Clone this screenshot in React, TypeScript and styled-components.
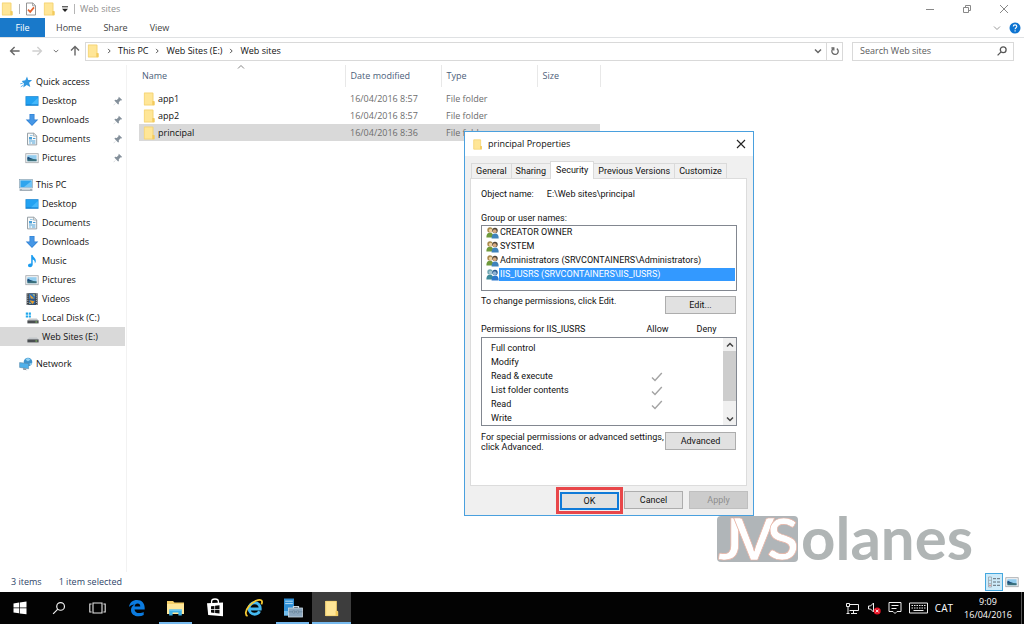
import React from "react";
import styled, { createGlobalStyle, css } from "styled-components";

const ui = `"Open Sans", "Noto Sans", sans-serif`;
const classic = `Roboto, "Liberation Sans", Arial, sans-serif`;

const Global = createGlobalStyle`
  * { box-sizing: border-box; }
  body { margin: 0; background: #fff; font-family: ${ui}; font-size: 9px; line-height: 14px; color: #111; }
  button, input { font: inherit; color: inherit; margin: 0; padding: 0; border: 0; background: none; border-radius: 0; }
  a { color: inherit; text-decoration: none; }
  ul { list-style: none; margin: 0; padding: 0; }
  svg { display: block; flex: none; }
`;

/* ---------- icons ---------- */
const Folder = ({ size = 14 }: { size?: number }) => (
  <svg width={size} height={size} viewBox="0 0 14 14">
    <path d="M2 .8h9.2v8.4l1.2.6v3.4H2z" fill="#fbdc7c" />
    <path d="M2 .8h8.6v12.4H2z" fill="#ffe697" />
    <path d="M10.4 9h2v4.2h-2z" fill="#f3c957" />
    <path d="M2.3 1.1h8.8v8.2l1 .4v3.2H2.3z" fill="none" stroke="#f0ce6c" strokeWidth=".6" />
  </svg>
);
const Chevron = ({ dir, size = 8, color = "#666", w = 1.2 }: { dir: "up" | "down" | "right"; size?: number; color?: string; w?: number }) => {
  const d = { up: "M1 5.5 4 2.5l3 3", down: "M1 2.5l3 3 3-3", right: "M2.8 1.2 5.6 4 2.8 6.8" }[dir];
  return (
    <svg width={size} height={size} viewBox="0 0 8 8" fill="none" stroke={color} strokeWidth={w}>
      <path d={d} />
    </svg>
  );
};
const Arrow = ({ turn = 0, color = "#666" }: { turn?: number; color?: string }) => (
  <svg width="12" height="12" viewBox="0 0 12 12" fill="none" stroke={color} strokeWidth="1.4">
    <path d="M10.6 6H1.8M5.6 2 1.6 6l4 4" transform={`rotate(${turn} 6 6)`} />
  </svg>
);
const CheckDoc = () => (
  <svg width="12" height="14" viewBox="0 0 12 14">
    <path d="M1.5 1h6.3l2.7 2.6V13h-9z" fill="#fff" stroke="#8a8a8a" strokeWidth=".9" />
    <path d="M7.6 1v2.8h2.8" fill="none" stroke="#8a8a8a" strokeWidth=".8" />
    <path d="M3 7.6l2.2 2.3L9 5.4" fill="none" stroke="#e2622f" strokeWidth="1.7" />
  </svg>
);
const Star = () => (
  <svg width="14" height="14" viewBox="0 0 14 14">
    <path d="M8 1.4 9.2 5l3.9-.1-3 2.9 1.2 4.2-3.6-2-3.4 2.6.6-4.2-2.2-2.3 3.7-.8z" fill="#2f97e0" />
    <path d="M1.3 8.8l2.5-.6M1.8 11.8l2.6-1.7" stroke="#61b5ef" strokeWidth="1" />
  </svg>
);
const Desktop = () => (
  <svg width="14" height="14" viewBox="0 0 14 14">
    <rect x=".5" y="2.2" width="13" height="9.6" fill="#1583d2" />
    <path d="M1.2 2.9h11.6v7.4H1.2z" fill="#22a2f2" />
    <path d="M6.2 10.3 12.8 4v6.3z" fill="#45b8fb" />
  </svg>
);
const Download = () => (
  <svg width="14" height="14" viewBox="0 0 14 14">
    <path d="M4.5 1h5v5.6h3.8L7 13 .7 6.6h3.8z" fill="#2e7fd2" />
    <path d="M5.2 1.6h3.6v5.7h2.8L7 12 2.4 7.3h2.8z" fill="#4597e6" />
  </svg>
);
const Documents = () => (
  <svg width="14" height="14" viewBox="0 0 14 14">
    <path d="M2.5 1.2h6.3l2.9 2.7v9H2.5z" fill="#f7f9fa" stroke="#8d979e" strokeWidth=".9" />
    <path d="M8.6 1.2v2.9h3" fill="none" stroke="#8d979e" strokeWidth=".7" />
    <path d="M4 5h3v2.4H4zM8 6h2.4v1H8zM4 8.6h6.4v.9H4zM7 10.4h3.4v1.2H7z" fill="#4b9fd6" />
    <path d="M4 10.4h2.2v1.2H4zM5 3.2h2.6V4H5z" fill="#73b7e2" />
  </svg>
);
const Pictures = () => (
  <svg width="14" height="14" viewBox="0 0 14 14">
    <rect x=".8" y="2.7" width="12.4" height="9" fill="#f3f4f5" stroke="#a0a5a9" strokeWidth=".8" />
    <rect x="2.4" y="4.2" width="9.2" height="6" fill="#93cdef" />
    <path d="M2.4 7.2c2.2-.8 4.2 1.2 9.2 1v2H2.4z" fill="#3a6f7b" />
    <path d="M2.4 5.8c2 0 3 2 5.4 2.2L2.4 8.6z" fill="#1f4f80" />
  </svg>
);
const Computer = () => (
  <svg width="14" height="14" viewBox="0 0 14 14">
    <rect x=".6" y="1.6" width="12.8" height="8.4" fill="#bfdcef" stroke="#7d98ab" strokeWidth=".6" />
    <rect x="1.5" y="2.5" width="11" height="6.6" fill="#30a5ee" />
    <path d="M5 9.1 12.5 3v6.1z" fill="#6cc4f8" />
    <path d="M.6 11.2h12.8v1.6H.6z" fill="#8c9aa5" />
    <path d="M3 11.2h8v.7H3z" fill="#dde4e8" />
  </svg>
);
const Music = () => (
  <svg width="14" height="14" viewBox="0 0 14 14">
    <path d="M6.2 1h1.4c.2 2.2 3.6 3 3.2 6.4-.1.8-.5 1.5-1 2 .3-2-.4-3.4-2.1-4v5.2c0 1.6-1.2 2.6-2.7 2.6-1.3 0-2-.7-2-1.7 0-1.4 1.5-2.5 3.2-2z" fill="#1b9cf0" />
  </svg>
);
const Videos = () => (
  <svg width="14" height="14" viewBox="0 0 14 14">
    <rect x="1.6" y="1.2" width="11" height="11.8" fill="#3a3f45" />
    <path d="M2.8 1.5v11.2M11.4 1.5v11.2" stroke="#c7ccd0" strokeWidth=".9" strokeDasharray="1.1 1" />
    <path d="M4 1.8h6.2v5H4z" fill="#3474b8" />
    <path d="M4 7.4h6.2v5H4z" fill="#2c62a2" />
    <path d="M4.6 2.4 9.2 6.4 6 6.6zM4.4 8.2l5.2 1-2 3z" fill="#e8a02c" />
    <path d="M7.6 2.2l2.2.4-.4 2zM4.4 10.6l2 1.4H4.4z" fill="#e5d05c" />
  </svg>
);
const Drive = ({ win }: { win?: boolean }) => (
  <svg width="14" height="14" viewBox="0 0 14 14">
    <path d="M4.2 7.6h7.6l1.8 2H2.4z" fill="#c3c7ca" />
    <rect x="2.4" y="9.4" width="11.2" height="3" fill="#4a4e51" />
    <path d="M10.4 11h1.8" stroke="#8bd65d" strokeWidth=".9" />
    {win && <path d="M.8 1.6h2.2v2.2H.8zM3.7 1.6h2.2v2.2H3.7zM.8 4.4h2.2v2.2H.8zM3.7 4.4h2.2v2.2H3.7z" fill="#20a8ec" />}
  </svg>
);
const NetworkIcon = () => (
  <svg width="14" height="14" viewBox="0 0 14 14">
    <circle cx="9" cy="5" r="4.3" fill="#3e93cc" />
    <path d="M6.6 2c1.8-1.4 4-.6 5 .6-1 .4-1.4 1.6-2.6 1.6S7.2 3.2 6.6 2zM10.4 6.6l2.6-.8c-.2 1.4-1 2.4-2 3z" fill="#8fd1f4" />
    <path d="M.6 5.6l9 1v5.2l-9-1.4z" fill="#4fb0ea" stroke="#5d8cab" strokeWidth=".6" />
    <path d="M4.2 11l2.8.5v1l1.6.8-4.6-.5z" fill="#8496a3" />
  </svg>
);
const Pin = () => (
  <svg width="10" height="10" viewBox="0 0 10 10">
    <path d="M5.8.8 9.2 4l-1.1.4-.4-.2-1.9 2 .1 1.7-.8.6-1.9-2L.8 9.2.6 9l2.6-2.6-1.8-1.8.7-.8 1.7.1 1.9-1.8-.2-.5z" fill="#84909b" />
  </svg>
);
const Magnifier = ({ size = 12, color = "#555", w = 1.3 }: { size?: number; color?: string; w?: number }) => (
  <svg width={size} height={size} viewBox="0 0 12 12" fill="none" stroke={color} strokeWidth={w}>
    <circle cx="7.2" cy="4.8" r="2.9" />
    <path d="M5.1 6.9 1.6 10.4" />
  </svg>
);
const Refresh = () => (
  <svg width="10" height="12" viewBox="0 0 10 12" fill="none" stroke="#666" strokeWidth="1.3">
    <path d="M6.8 3.6A3.2 3.2 0 1 1 3 3.8" />
    <path d="M1.4 3h2.4v2.6" />
  </svg>
);
const Users = ({ selected }: { selected?: boolean }) => (
  <svg width="13" height="13" viewBox="0 0 13 13">
    <path d="M.4 11.6c0-3.6 1.4-4.9 3.7-4.9s3.4 1.6 3.4 4.9z" fill={selected ? "#3d8b9b" : "#6f9a3c"} />
    <circle cx="4" cy="3.9" r="2.7" fill={selected ? "#6fa5b0" : "#a88a4c"} />
    <circle cx="4.6" cy="4.5" r="1.7" fill={selected ? "#a5c5d5" : "#f0d2a4"} />
    <path d="M5.6 12.4c0-3.6 1.2-5 3.6-5s3.5 1.6 3.5 5z" fill={selected ? "#2d78cc" : "#3f83bb"} />
    <circle cx="9" cy="4.4" r="2.7" fill={selected ? "#27598f" : "#4e4436"} />
    <circle cx="8.7" cy="5.2" r="1.9" fill={selected ? "#92b4d4" : "#d8ab82"} />
  </svg>
);
const Tick = () => (
  <svg width="12" height="10" viewBox="0 0 12 10" fill="none" stroke="#a3a3a3" strokeWidth="1.4">
    <path d="M1 5.4 4 8.4 10.8 1" />
  </svg>
);
const CloseX = ({ color, w = 1 }: { color: string; w?: number }) => (
  <svg width="10" height="10" viewBox="0 0 10 10" stroke={color} strokeWidth={w}>
    <path d="M1 1l8 8M9 1 1 9" />
  </svg>
);

/* ---------- frame ---------- */
const Page = styled.div`position: relative; display: flex; flex-direction: column; min-height: 100vh;`;
const TitleBar = styled.header`display: flex; align-items: center; height: 18px; padding-right: 2px; color: #8e8e8e;`;
const QuickTools = styled.div`display: flex; align-items: center; gap: 5px; flex: 1; padding-right: 8px;`;
const ToolButton = styled.button`display: flex; align-items: center; justify-content: center;`;
const Rule = styled.span`width: 1px; height: 10px; background: #b5b5b5;`;
const WindowButtons = styled.div`display: flex;`;
const WindowButton = styled.button`display: flex; align-items: center; justify-content: center; width: 37px; height: 18px;`;

const Ribbon = styled.nav`display: flex; align-items: center; height: 20px; border-bottom: 1px solid #dfe1e3; padding-right: 3px;`;
const RibbonTab = styled.button<{ $file?: boolean }>`
  height: 19px; padding: 0 11px; color: #3f3f3f;
  ${p => p.$file && css`width: 45px; background: #1979ca; color: #fff;`}
`;
const RibbonEnd = styled.div`display: flex; align-items: center; gap: 8px; margin-left: auto;`;

const AddressRow = styled.div`display: flex; align-items: center; height: 27px; padding: 0 10px 1px 9px;`;
const NavButtons = styled.div`display: flex; align-items: center; gap: 10px; width: 76px; flex: none;`;
const AddressBox = styled.div`display: flex; flex: 1; height: 19px; border: 1px solid #d9d9d9; margin-right: 9px;`;
const Crumbs = styled.nav`display: flex; align-items: center; gap: 6px; flex: 1;`;
const BoxButton = styled.button<{ $line?: boolean }>`
  display: flex; align-items: center; justify-content: center; width: 16px;
  ${p => p.$line && css`border-left: 1px solid #d9d9d9;`}
`;
const SearchBox = styled.label`
  display: flex; align-items: center; width: 162px; height: 19px; border: 1px solid #d9d9d9; padding: 0 5px 0 7px;
  input { flex: 1; min-width: 0; outline: 0; }
  input::placeholder { color: #5b5b5b; opacity: 1; }
`;

/* ---------- explorer body ---------- */
const Body = styled.div`display: flex; flex: 1;`;
const Sidebar = styled.nav`display: flex; flex-direction: column; gap: 8px; width: 127px; flex: none; padding-top: 7px; border-right: 1px solid #f2f2f2;`;
const NavItem = styled.a<{ $level: number; $active?: boolean }>`
  display: flex; align-items: center; gap: 3px; height: 19px; margin-right: 1px; padding: 0 2px 0 ${p => (p.$level ? 25 : 19)}px;
  background: ${p => (p.$active ? "#d9d9d9" : "transparent")};
  span { flex: 1; white-space: nowrap; }
`;
const Main = styled.main`flex: 1; padding: 0 0 0 12px;`;
const Files = styled.table`
  border-collapse: collapse; table-layout: fixed; width: 461px; color: #6d6d6d;
  th { position: relative; height: 22px; padding: 0 5px; border-right: 1px solid #e8e8e8; font-weight: 400; text-align: left; color: #4c607a; }
  th:first-child { padding-left: 3px; }
  td { height: 17px; padding: 0 5px; white-space: nowrap; }
  td:first-child { color: #111; padding-left: 3px; }
  thead::after { content: ""; display: block; height: 3px; }
`;
const SortMark = styled.span`position: absolute; top: -2px; left: 98px;`;
const FileRow = styled.tr<{ $selected?: boolean }>`
  td { background: ${p => (p.$selected ? "#d9d9d9" : "transparent")}; }
`;
const FileName = styled.a`display: flex; align-items: center; gap: 2px;`;
const StatusBar = styled.footer`display: flex; align-items: center; height: 20px; padding: 0 3px 0 11px; color: #2d4468;`;
const Counts = styled.div`display: flex; gap: 17px; flex: 1;`;
const ViewButton = styled.button<{ $on?: boolean }>`
  display: flex; align-items: center; justify-content: center; width: 18px; height: 18px;
  ${p => p.$on && css`background: #cdeaf9; border: 1px solid #45a8df;`}
`;

/* ---------- dialog ---------- */
const Dialog = styled.section`
  position: absolute; top: 131px; left: 464px; width: 290px; border: 1px solid #4aa0de; background: #f0f0f0;
  font-family: ${classic}; line-height: 10px; color: #111;
`;
const DialogTitle = styled.header`
  display: flex; align-items: center; gap: 5px; height: 24px; padding: 0 7px; background: #fff; font-family: ${ui};
  h1 { flex: 1; margin: 0; font-size: 9px; font-weight: 400; }
`;
const DialogTabs = styled.div`display: flex; align-items: flex-end; height: 22px; padding: 0 6px;`;
const DialogTab = styled.button<{ $on?: boolean }>`
  height: 15px; padding: 0 4px; border: 1px solid #dadada; border-bottom: 0; margin-right: -1px; white-space: nowrap;
  ${p => p.$on && css`position: relative; height: 18px; padding: 0 5px 2px; margin-bottom: -1px; background: #fff;`}
`;
const Panel = styled.div`
  display: flex; flex-direction: column; margin: 0 6px 0 5px; height: 308px; padding: 10px 9px 0 10px; background: #fff; border: 1px solid #dcdcdc;
`;
const ObjectLine = styled.p`display: flex; gap: 13px; margin: 0 0 14px;`;
const Caption = styled.span`display: block; margin-bottom: 2px;`;
const UserList = styled.ul`display: flex; flex-direction: column; gap: 1px; height: 66px; border: 1px solid #828790; padding-right: 1px; margin-bottom: 5px;`;
const UserRow = styled.li<{ $on?: boolean }>`
  display: flex; align-items: center; height: 13px; padding-left: 4px;
  span { flex: 1; line-height: 13px; padding-left: 1px; ${p => p.$on && css`background: #3399ff; color: #fff;`} }
`;
const SplitRow = styled.div`
  display: flex; justify-content: space-between; align-items: flex-start; padding-right: 1px;
  p { margin: 0; width: 184px; }
`;
const PushButton = styled.button<{ $w?: number }>`
  flex: none; width: ${p => p.$w ?? 71}px; height: 18px; background: #e1e1e1; border: 1px solid #adadad;
  &:disabled { color: #8e8e8e; background: #ccc; border-color: #bfbfbf; }
`;
const PermWrap = styled.div`position: relative; margin: 10px 0 6px;`;
const Perms = styled.table`
  display: block;
  thead { display: block; height: 13px; }
  tbody { display: block; height: 89px; padding-top: 3px; overflow: hidden; border: 1px solid #828790; }
  tr { display: flex; }
  th, td { padding: 0; font-weight: 400; text-align: center; width: 49px; }
  th:first-child, td:first-child { width: 152px; text-align: left; }
  tbody td { height: 14px; line-height: 14px; padding-top: 0; }
  tbody td svg { margin: 3px 0 0 17px; }
  tbody td:first-child { padding-left: 9px; }
`;
const ScrollBar = styled.div`
  position: absolute; right: 1px; bottom: 1px; width: 13px; height: 87px; display: flex; flex-direction: column; background: #f0f0f0;
  button { display: flex; align-items: center; justify-content: center; height: 13px; }
`;
const Thumb = styled.span`height: 50px; background: #cdcdcd; margin-bottom: auto;`;
const DialogActions = styled.footer`display: flex; justify-content: flex-end; gap: 6px; padding: 1px 5px 0 0; height: 29px;`;
const Highlight = styled.span`
  display: flex; align-items: center; justify-content: center; width: 67px; height: 27px; border: 3px solid #e8474a; margin-right: -5px;
  button { border: 2px solid #0f7ad8; }
`;
const PlainSlot = styled.span`padding-top: 4px;`;

const Watermark = styled.div`position: absolute; top: 510px; left: 714px; pointer-events: none;`;

/* ---------- taskbar ---------- */
const Taskbar = styled.footer`display: flex; height: 32px; background: #030303; color: #fff;`;
const TaskButton = styled.button<{ $open?: boolean; $active?: boolean }>`
  display: flex; align-items: center; justify-content: center; width: 39px; height: 32px; position: relative;
  background: ${p => (p.$active ? "#3d3d3d" : "transparent")};
  ${p => (p.$open || p.$active) && css`
    &::after { content: ""; position: absolute; bottom: 0; left: ${p.$active ? 0 : 3}px; right: ${p.$active ? 0 : 3}px; height: 2px; background: #76b9ed; }
  `}
`;
const Tray = styled.div`display: flex; align-items: center; gap: 7px; margin-left: auto; padding-right: 2px;`;
const Language = styled.span`font-size: 10px;`;
const Clock = styled.time`width: 48px; margin: 0 2px 0 4px; text-align: center; line-height: 13px; white-space: nowrap;`;
const ShowDesktop = styled.button`width: 1px; height: 32px; background: #555;`;

type Nav = [string, React.ReactNode, boolean?];
const quick: Nav[] = [["Desktop", <Desktop />], ["Downloads", <Download />], ["Documents", <Documents />], ["Pictures", <Pictures />]];
const pc: Nav[] = [
  ["Desktop", <Desktop />], ["Documents", <Documents />], ["Downloads", <Download />], ["Music", <Music />],
  ["Pictures", <Pictures />], ["Videos", <Videos />], ["Local Disk (C:)", <Drive win />], ["Web Sites (E:)", <Drive />, true],
];
const files = [["app1", "16/04/2016 8:57"], ["app2", "16/04/2016 8:57"], ["principal", "16/04/2016 8:36"]];
const users = ["CREATOR OWNER", "SYSTEM", "Administrators (SRVCONTAINERS\\Administrators)", "IIS_IUSRS (SRVCONTAINERS\\IIS_IUSRS)"];
const perms: [string, boolean][] = [["Full control", false], ["Modify", false], ["Read & execute", true], ["List folder contents", true], ["Read", true], ["Write", false]];

const WinLogo = () => (
  <svg width="14" height="14" viewBox="0 0 14 14" fill="#fff">
    <path d="M.5 2.4 6 1.6v5H.5zM6.7 1.5 13.5.6v6H6.7zM.5 7.3H6v5l-5.5-.8zM6.7 7.3h6.8v6l-6.8-.9z" />
  </svg>
);
const TaskView = () => (
  <svg width="17" height="14" viewBox="0 0 17 14" fill="none" stroke="#e6e6e6" strokeWidth="1.1">
    <path d="M4 2h9v10H4zM2.6 3H.8v8h1.8M14.4 3h1.8v8h-1.8" />
  </svg>
);
const Edge = () => (
  <svg width="18" height="18" viewBox="0 0 18 18">
    <path d="M1 8C1.6 3.6 4.8 1 9 1c5 0 7.7 3.5 7.7 7.8v1.7H6.5c.2 2.5 2.3 3.6 4.8 3.6 1.7 0 3.2-.5 4.4-1.2v3.2c-1.500.8-3.2 1.2-5.1 1.2-4.4 0-7.6-2.3-7.6-6.3 0-2.5 1.4-4.5 3.6-5.6C4.3 5.6 2.3 6.3 1 8zm5.6-.5h5.7c0-1.9-1-3.1-2.7-3.1-1.7 0-2.8 1.2-3 3.1z" fill="#0b7be0" />
  </svg>
);
const ExplorerIcon = () => (
  <svg width="19" height="18" viewBox="0 0 19 18">
    <path d="M1 2h6l1.5 1.5H18V15H1z" fill="#f5cf69" />
    <path d="M1 5h17v10H1z" fill="#ffe79a" />
    <path d="M3.2 16.5V10.5h12.6v6h-3.4v-3H6.6v3z" fill="#3cb0e8" />
    <path d="M3.2 10.5h12.6v1.3H3.2z" fill="#73cdf4" />
  </svg>
);
const Store = () => (
  <svg width="18" height="20" viewBox="0 0 18 20">
    <path d="M5.6 6V3.4C5.6 1.8 7 1 9 1s3.4.8 3.4 2.4V6" fill="none" stroke="#fff" strokeWidth="1.3" />
    <path d="M1 5.2 17 4.4v13.8L2.2 17z" fill="#fff" />
    <path d="M5 8.3l3.4-.4v3.1H5zM9.1 7.8l4.4-.5V11H9.1zM5 11.7h3.4v3.2L5 14.5zM9.1 11.7h4.4v3.7l-4.4-.4z" fill="#0a0a0a" />
  </svg>
);
const IE = () => (
  <svg width="20" height="20" viewBox="0 0 20 20" fill="none">
    <path d="M5.6 11h10.6C16.4 7.2 14 4.8 10.7 4.8 7.4 4.8 5 7.3 5 10.5c0 3.3 2.4 5.7 5.7 5.7 2.3 0 4-1 4.8-2.9" stroke="#45baf0" strokeWidth="2.9" />
    <path d="M3.6 18C.8 17.2 1.4 12.6 4.8 8.4 9 3.2 15.2.6 17.4 2.4c.9.8.8 2.4 0 4" stroke="#f5c832" strokeWidth="1.8" />
  </svg>
);
const Server = () => (
  <svg width="20" height="20" viewBox="0 0 20 20">
    <path d="M1 .5h10v17H1z" fill="#2f8fd6" />
    <path d="M2.2 3.2h7.6M2.2 5.6h7.6" stroke="#b6def7" strokeWidth="1" />
    <path d="M1 13h6v4.5H1z" fill="#73bdec" />
    <path d="M10.5 10V8.6h5V10" fill="none" stroke="#c8d5df" strokeWidth="1.2" />
    <rect x="5.5" y="10" width="14" height="9" fill="#8ba6bd" stroke="#cbd9e4" strokeWidth=".8" />
    <path d="M5.5 13.8h14M10 12.6h1.6v2.4H10zM14 12.6h1.6v2.4H14z" stroke="#5b7890" strokeWidth=".6" fill="#d7e2ea" />
  </svg>
);
const tasks: [string, React.ReactNode, boolean?, boolean?][] = [
  ["Start", <WinLogo />], ["Search", <Magnifier size={16} color="#f0f0f0" w={0.9} />], ["Task View", <TaskView />], ["Edge", <Edge />],
  ["File Explorer", <ExplorerIcon />, true], ["Store", <Store />], ["Internet Explorer", <IE />], ["Server Manager", <Server />, true],
  ["Folder", <Folder size={17} />, true, true],
];

export default function App() {
  return (
    <Page>
      <Global />
      <TitleBar>
        <QuickTools>
          <Folder />
          <Rule />
          <ToolButton aria-label="Properties"><CheckDoc /></ToolButton>
          <ToolButton aria-label="New folder"><Folder /></ToolButton>
          <ToolButton aria-label="Customize toolbar">
            <svg width="8" height="8" viewBox="0 0 8 8"><path d="M1 1.8h6" stroke="#222" strokeWidth="1" /><path d="M1 3.8h6L4 7z" fill="#222" /></svg>
          </ToolButton>
          <Rule />
          <span>Web sites</span>
        </QuickTools>
        <WindowButtons>
          <WindowButton aria-label="Minimize"><svg width="10" height="10" viewBox="0 0 10 10"><path d="M1 5.5h8" stroke="#888" /></svg></WindowButton>
          <WindowButton aria-label="Restore"><svg width="10" height="10" viewBox="0 0 10 10" fill="none" stroke="#888"><path d="M1.5 3.5h5v5h-5zM3.5 3.5v-2h5v5h-2" /></svg></WindowButton>
          <WindowButton aria-label="Close"><CloseX color="#888" /></WindowButton>
        </WindowButtons>
      </TitleBar>
      <Ribbon>
        <RibbonTab $file>File</RibbonTab>
        <RibbonTab>Home</RibbonTab>
        <RibbonTab>Share</RibbonTab>
        <RibbonTab>View</RibbonTab>
        <RibbonEnd>
          <ToolButton aria-label="Expand ribbon"><Chevron dir="down" color="#999" w={1} /></ToolButton>
          <ToolButton aria-label="Help">
            <svg width="12" height="12" viewBox="0 0 12 12">
              <circle cx="6" cy="6" r="5.5" fill="#0d74d1" />
              <path d="M4.3 4.5c0-2.2 3.5-2.2 3.5 0 0 1.2-1.7 1.3-1.7 2.7M6.1 8.2v1.2" fill="none" stroke="#fff" strokeWidth="1.1" />
            </svg>
          </ToolButton>
        </RibbonEnd>
      </Ribbon>
      <AddressRow>
        <NavButtons>
          <ToolButton aria-label="Back"><Arrow /></ToolButton>
          <ToolButton aria-label="Forward"><Arrow turn={180} color="#cfcfcf" /></ToolButton>
          <ToolButton aria-label="Recent"><Chevron dir="down" size={6} /></ToolButton>
          <ToolButton aria-label="Up"><Arrow turn={90} /></ToolButton>
        </NavButtons>
        <AddressBox>
          <Crumbs>
            <Folder />
            <Chevron dir="right" size={6} color="#444" />
            <a href="#pc">This PC</a>
            <Chevron dir="right" size={6} color="#444" />
            <a href="#drive">Web Sites (E:)</a>
            <Chevron dir="right" size={6} color="#444" />
            <a href="#folder">Web sites</a>
          </Crumbs>
          <BoxButton aria-label="Previous locations"><Chevron dir="down" w={1.5} /></BoxButton>
          <BoxButton $line aria-label="Refresh"><Refresh /></BoxButton>
        </AddressBox>
        <SearchBox><input type="text" aria-label="Search Web sites" placeholder="Search Web sites" /><Magnifier /></SearchBox>
      </AddressRow>

      <Body>
        <Sidebar>
          <div>
            <NavItem href="#quick" $level={0}><Star /><span>Quick access</span></NavItem>
            {quick.map(([name, icon]) => <NavItem key={name} href="#item" $level={1}>{icon}<span>{name}</span><Pin /></NavItem>)}
          </div>
          <div>
            <NavItem href="#pc" $level={0}><Computer /><span>This PC</span></NavItem>
            {pc.map(([name, icon, on]) => <NavItem key={name} href="#item" $level={1} $active={on}>{icon}<span>{name}</span></NavItem>)}
          </div>
          <div>
            <NavItem href="#network" $level={0}><NetworkIcon /><span>Network</span></NavItem>
          </div>
        </Sidebar>
        <Main>
          <Files>
            <colgroup><col width="206" /><col width="96" /><col width="96" /><col width="63" /></colgroup>
            <thead>
              <tr><th>Name<SortMark><Chevron dir="up" color="#777" w={0.9} /></SortMark></th><th>Date modified</th><th>Type</th><th>Size</th></tr>
            </thead>
            <tbody>
              {files.map(([name, date]) => (
                <FileRow key={name} $selected={name === "principal"}>
                  <td><FileName href="#file"><Folder />{name}</FileName></td><td>{date}</td><td>File folder</td><td />
                </FileRow>
              ))}
            </tbody>
          </Files>
        </Main>
      </Body>
      <StatusBar>
        <Counts><span>3 items</span><span>1 item selected</span></Counts>
        <ViewButton $on aria-label="Details view">
          <svg width="14" height="12" viewBox="0 0 14 12" fill="none">
            <path d="M1.5 1h3v10h-3zM1.5 4.3h3M1.5 7.6h3" stroke="#9aa4ab" strokeWidth=".8" />
            <path d="M6 2.7h3M10 2.7h3M6 6h3M10 6h3M6 9.3h3M10 9.3h3" stroke="#5f6b74" strokeWidth="1" />
            <path d="M2.3 9.3h1.4" stroke="#e2574c" />
          </svg>
        </ViewButton>
        <ViewButton aria-label="Thumbnail view"><Pictures /></ViewButton>
      </StatusBar>

      <Taskbar>
        {tasks.map(([name, icon, open, active]) => <TaskButton key={name} aria-label={name} $open={open} $active={active}>{icon}</TaskButton>)}
        <Tray>
          <svg width="15" height="14" viewBox="0 0 15 14" fill="none" stroke="#f0f0f0" strokeWidth="1">
            <path d="M5 3.5h8.5v6H4.5M8.5 9.5v2.5M6 12.5h6M1.5 2.5h3v3h-3zM3 5.5v7M1.5 12.5h3" />
          </svg>
          <svg width="14" height="14" viewBox="0 0 14 14" fill="none">
            <path d="M1.5 5h2l3-3v9l-3-3h-2z" stroke="#f0f0f0" />
            <circle cx="10.2" cy="10" r="3.5" fill="#e81123" /><path d="M8.8 8.6l2.8 2.8M11.6 8.6l-2.8 2.8" stroke="#fff" />
          </svg>
          <svg width="14" height="14" viewBox="0 0 14 14" fill="none" stroke="#f0f0f0">
            <path d="M1 1.5h12v9H9L7 12.5 5 10.5H1zM3.5 4.5h7M3.5 7.5h5" />
          </svg>
          <svg width="19" height="12" viewBox="0 0 19 12" fill="none" stroke="#f0f0f0">
            <path d="M.5 1h18v10H.5z" /><path d="M2.5 3.5h14M2.5 6h14" strokeDasharray="1.5 1" /><path d="M4.5 8.5h10" />
          </svg>
          <Language>CAT</Language>
          <Clock>9:09<br />16/04/2016</Clock>
          <ShowDesktop aria-label="Show desktop" />
        </Tray>
      </Taskbar>

      <Watermark>
        <svg width="264" height="56" viewBox="0 0 264 56" role="img" aria-label="JVSolanes" fontFamily="Lato, sans-serif" fontWeight="700">
          <rect x="3" y="6" width="81" height="46" rx="4" fill="#b0b5b8" />
          <text x="4 20 53" y="50" fill="#fff" stroke="#e8b3a4" strokeWidth=".7" fontSize="58">JVS</text>
          <text x="87" y="50" fontSize="60" fill="#b0b5b5">olanes</text>
        </svg>
      </Watermark>

      <Dialog role="dialog" aria-label="principal Properties">
        <DialogTitle><Folder size={11} /><h1>principal Properties</h1><ToolButton aria-label="Close dialog"><CloseX color="#222" w={1.1} /></ToolButton></DialogTitle>
        <DialogTabs role="tablist">
          {["General", "Sharing", "Security", "Previous Versions", "Customize"].map(t => <DialogTab key={t} role="tab" aria-selected={t === "Security"} $on={t === "Security"}>{t}</DialogTab>)}
        </DialogTabs>
        <Panel>
          <ObjectLine><span>Object name:</span><span>E:\Web sites\principal</span></ObjectLine>
          <Caption id="users">Group or user names:</Caption>
          <UserList role="listbox" aria-labelledby="users">
            {users.map((u, i) => <UserRow key={u} role="option" aria-selected={i === 3} $on={i === 3}><Users selected={i === 3} /><span>{u}</span></UserRow>)}
          </UserList>
          <SplitRow><p>To change permissions, click Edit.</p><PushButton>Edit...</PushButton></SplitRow>
          <PermWrap>
            <Perms>
              <thead><tr><th>Permissions for IIS_IUSRS</th><th>Allow</th><th>Deny</th></tr></thead>
              <tbody>{perms.map(([p, ok]) => <tr key={p}><td>{p}</td><td>{ok && <Tick />}</td><td /></tr>)}</tbody>
            </Perms>
            <ScrollBar>
              <button aria-label="Scroll up"><Chevron dir="up" w={1.5} color="#444" /></button>
              <Thumb />
              <button aria-label="Scroll down"><Chevron dir="down" w={1.5} color="#444" /></button>
            </ScrollBar>
          </PermWrap>
          <SplitRow><p>For special permissions or advanced settings, click Advanced.</p><PushButton>Advanced</PushButton></SplitRow>
        </Panel>
        <DialogActions>
          <Highlight><PushButton $w={59}>OK</PushButton></Highlight>
          <PlainSlot><PushButton $w={59}>Cancel</PushButton></PlainSlot>
          <PlainSlot><PushButton $w={59} disabled>Apply</PushButton></PlainSlot>
        </DialogActions>
      </Dialog>
    </Page>
  );
}
